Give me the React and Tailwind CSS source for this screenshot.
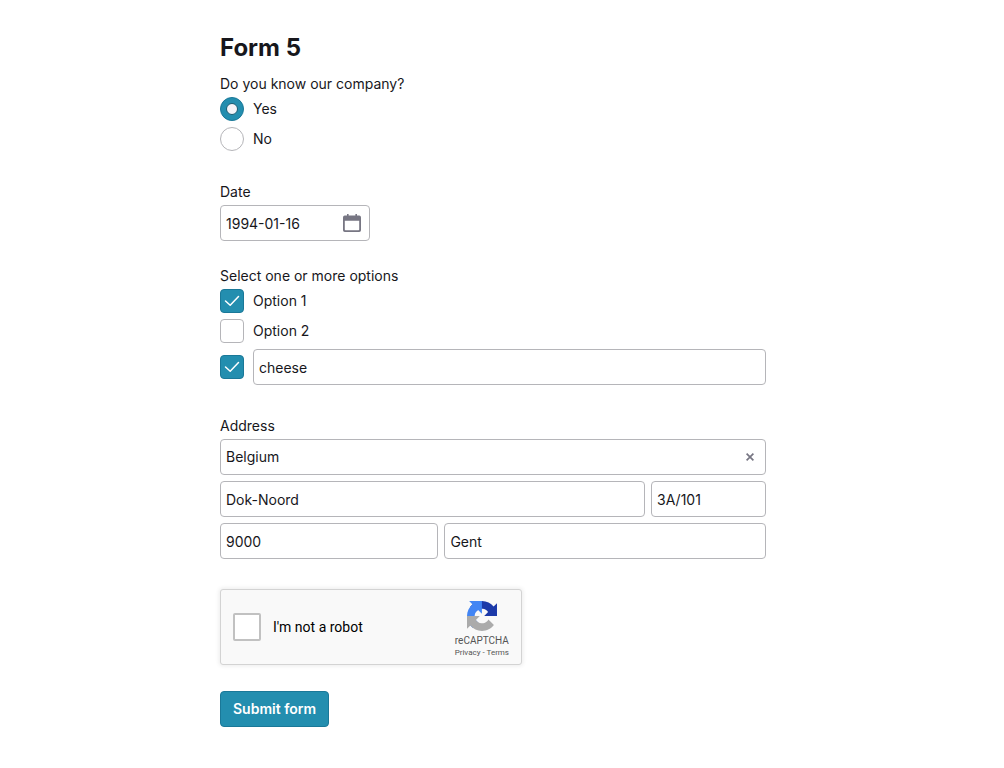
import React, { useState } from "react";

const inputClass =
  "h-9 w-full min-w-0 rounded-[4px] border border-[#b5b5b9] bg-white px-[5px] text-sm text-[#17171c] outline-none focus:border-[#238eaf]";

const Group = ({ label, children }) => (
  <fieldset className="mb-6 min-w-0">
    <legend className="mb-[3px] text-sm leading-[21px]">{label}</legend>
    {children}
  </fieldset>
);

const CheckBox = (props) => (
  <span className="relative block size-6 shrink-0">
    <input
      type="checkbox"
      className="peer block size-6 appearance-none rounded-[4px] border border-[#b5b5b9] bg-white checked:border-[#1a7898] checked:bg-[#238eaf]"
      {...props}
    />
    <svg
      viewBox="0 0 24 24"
      fill="none"
      stroke="#fff"
      strokeWidth="1.5"
      strokeLinecap="round"
      strokeLinejoin="round"
      className="pointer-events-none absolute inset-0 hidden size-6 peer-checked:block"
    >
      <path d="M5.500 12l4.700 4.300L18.500 7.500" />
    </svg>
  </span>
);

const Radio = ({ label, ...props }) => (
  <label className="mb-1.5 flex items-center gap-[9px] text-sm leading-6">
    <input
      type="radio"
      className="grid size-6 shrink-0 appearance-none place-items-center rounded-full border border-[#b5b5b9] bg-white before:hidden before:size-3 before:rounded-full before:border before:border-[#175b72] before:bg-[#f4f4f8] checked:border-[#1a7898] checked:bg-[#238eaf] checked:before:block"
      {...props}
    />
    {label}
  </label>
);

const CalendarIcon = () => (
  <svg viewBox="0 0 18 18" className="size-[18px]" fill="#777683">
    <path
      fillRule="evenodd"
      d="M4 0h1.600v1.600h6.800V0H14v1.600h2.200A1.800 1.800 0 0 1 18 3.400V16.200A1.800 1.800 0 0 1 16.200 18H1.800A1.800 1.800 0 0 1 0 16.200V3.400A1.800 1.800 0 0 1 1.800 1.600H4zM1.800 6.800v8.700a.7.7 0 0 0 .7.7h13a.7.7 0 0 0 .7-.7V6.800z"
    />
  </svg>
);

const RecaptchaLogo = () => (
  <svg viewBox="0 0 64 64" className="size-[30px]">
    <path
      fill="#1c3aa9"
      d="M64 31.955l-.033-1.37V4.687l-7.16 7.16C50.948 4.674 42.033.093 32.05.093c-10.4 0-19.622 4.96-25.458 12.64l11.736 11.86a15.55 15.55 0 0 1 4.754-5.334c2.05-1.6 4.952-2.906 8.968-2.906.485 0 .86.057 1.135.163 4.976.393 9.288 3.14 11.828 7.124l-8.307 8.307L64 31.953"
    />
    <path
      fill="#4285f4"
      d="M31.862.094l-1.37.033H4.594l7.16 7.16C4.58 13.147 0 22.06 0 32.046c0 10.4 4.96 19.622 12.64 25.458L24.5 45.768a15.55 15.55 0 0 1-5.334-4.754c-1.6-2.05-2.906-4.952-2.906-8.968 0-.485.057-.86.163-1.135.393-4.976 3.14-9.288 7.124-11.828l8.307 8.307L31.86.095"
    />
    <path
      fill="#ababab"
      d="M.001 32.045l.033 1.37v25.898l7.16-7.16c5.86 7.173 14.774 11.754 24.76 11.754 10.4 0 19.622-4.96 25.458-12.64l-11.736-11.86a15.55 15.55 0 0 1-4.754 5.334c-2.05 1.6-4.952 2.906-8.968 2.906-.485 0-.86-.057-1.135-.163-4.976-.393-9.288-3.14-11.828-7.124l8.307-8.307c-10.522.04-22.4.066-27.295-.005"
    />
  </svg>
);

const App = () => {
  const [country, setCountry] = useState("Belgium");

  return (
    <main className="mx-auto max-w-[564px] pt-[30px] pr-[18px] pb-10 font-['Inter',sans-serif] text-[#17171c]">
      <form onSubmit={(e) => e.preventDefault()}>
        <h1 className="mb-[7px] text-2xl leading-9 font-bold">Form 5</h1>

        <Group label="Do you know our company?">
          <Radio name="company" label="Yes" defaultChecked />
          <Radio name="company" label="No" />
        </Group>

        <div className="mb-6">
          <label htmlFor="date" className="mb-[3px] block text-sm leading-[21px]">
            Date
          </label>
          <div className="relative w-[150px]">
            <input id="date" type="text" defaultValue="1994-01-16" className={inputClass} />
            <button type="button" aria-label="Open calendar" className="absolute inset-y-0 right-[9px] flex items-center">
              <CalendarIcon />
            </button>
          </div>
        </div>

        <Group label="Select one or more options">
          <label className="mb-1.5 flex items-center gap-[9px] text-sm leading-6">
            <CheckBox defaultChecked />
            Option 1
          </label>
          <label className="mb-1.5 flex items-center gap-[9px] text-sm leading-6">
            <CheckBox />
            Option 2
          </label>
          <div className="mb-1.5 flex items-center gap-[9px]">
            <CheckBox defaultChecked aria-label="Other option" />
            <input type="text" aria-label="Other" defaultValue="cheese" className={inputClass} />
          </div>
        </Group>

        <Group label="Address">
          <div className="relative mb-1.5">
            <select
              aria-label="Country"
              value={country}
              onChange={(e) => setCountry(e.target.value)}
              className={`appearance-none ${inputClass}`}
            >
              <option value=""></option>
              <option value="Belgium">Belgium</option>
            </select>
            <button
              type="button"
              aria-label="Clear country"
              onClick={() => setCountry("")}
              className="absolute inset-y-0 right-3 flex items-center"
            >
              <svg viewBox="0 0 8 8" className="size-2" fill="none" stroke="#777683" strokeWidth="1.7">
                <path d="M.6.6l6.800 6.800M7.400.6L.6 7.400" />
              </svg>
            </button>
          </div>
          <div className="mb-1.5 flex gap-1.5">
            <input type="text" aria-label="Street" defaultValue="Dok-Noord" className={inputClass} />
            <div className="w-[115px] shrink-0">
              <input type="text" aria-label="Number" defaultValue="3A/101" className={inputClass} />
            </div>
          </div>
          <div className="mb-1.5 flex gap-1.5">
            <div className="w-2/5 shrink-0">
              <input type="text" aria-label="Postal code" defaultValue="9000" className={inputClass} />
            </div>
            <input type="text" aria-label="City" defaultValue="Gent" className={inputClass} />
          </div>
        </Group>

        <div className="mb-[26px] flex w-[302px] items-center justify-between rounded-[3px] border border-[#d3d3d3] bg-[#f9f9f9] px-3 font-['Roboto',sans-serif] shadow-[0_0_4px_1px_rgba(0,0,0,0.08)]">
          <label className="flex items-center gap-3 text-sm text-black">
            <input type="checkbox" className="size-7 appearance-none rounded-[2px] border-2 border-[#c1c1c1] bg-white" />
            I'm not a robot
          </label>
          <div className="flex flex-col items-center pt-[11px] pb-[5px] text-[#555]">
            <RecaptchaLogo />
            <span className="mt-1 text-[10px] leading-3">reCAPTCHA</span>
            <span className="text-[8px] leading-3">
              <a href="#privacy">Privacy</a> - <a href="#terms">Terms</a>
            </span>
          </div>
        </div>

        <button
          type="submit"
          className="block h-9 rounded-[4px] border border-[#1a7898] bg-[#238eaf] px-3 text-sm font-semibold text-white"
        >
          Submit form
        </button>
      </form>
    </main>
  );
};

export default App;
